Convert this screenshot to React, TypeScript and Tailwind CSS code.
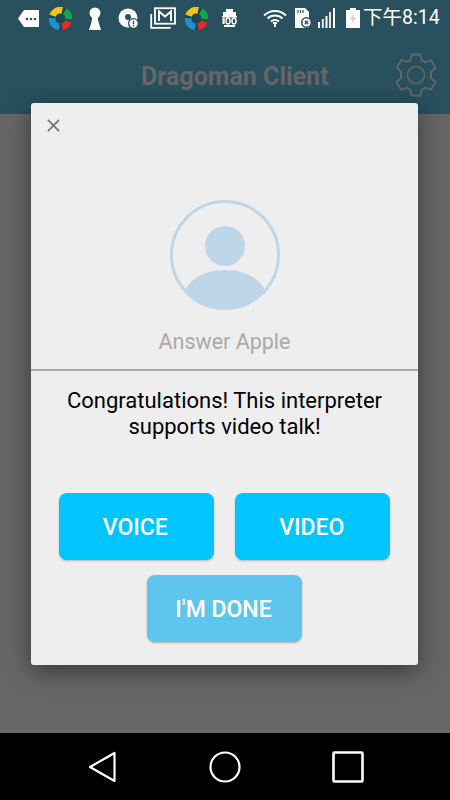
import React from 'react';

const AppRing: React.FC<{ className?: string }> = ({ className }) => (
    <svg viewBox="0 0 22 22" className={className} fill="none" strokeWidth="6.500">
        <circle cx="11" cy="11" r="11" fill="#1f4654" stroke="none" />
        <path d="M3.400 8.200A8 8 0 0 1 12.600 3.200" stroke="#f2c80f" />
        <path d="M15 4.100A8 8 0 0 1 19 11.500" stroke="#12a84a" />
        <path d="M18.600 13.700A8 8 0 0 1 12.500 18.900" stroke="#d9302c" />
        <path d="M9.800 18.900A8 8 0 0 1 3 10.500" stroke="#1b92d0" />
    </svg>
);

const StatusBar: React.FC = () => (
    <div className="flex h-[36px] items-center pl-[18px]">
        <svg viewBox="0 0 21 17" className="h-[17px] w-[21px]">
            <path d="M6 0h15v17H6L0 8.500z" fill="#fff" />
            <circle cx="9" cy="9" r="1.300" fill="#28505e" />
            <circle cx="13" cy="9" r="1.300" fill="#28505e" />
            <circle cx="17" cy="9" r="1.300" fill="#28505e" />
        </svg>
        <AppRing className="ml-[10px] h-[23px] w-[23px]" />
        <svg viewBox="0 0 14 23" className="ml-[16px] h-[23px] w-[14px]">
            <circle cx="7" cy="6" r="5.500" fill="#fff" />
            <path d="M4.500 9h5l1 6 2.500 8H1l2.500-8z" fill="#fff" />
        </svg>
        <svg viewBox="0 0 21 21" className="ml-[16px] h-[21px] w-[21px]">
            <circle cx="10" cy="10" r="9.500" fill="#fff" />
            <circle cx="10" cy="9" r="3" fill="#28505e" />
            <circle cx="15.500" cy="15.500" r="5.500" fill="#28505e" />
            <circle cx="15.500" cy="15.500" r="4.200" fill="#fff" />
            <rect x="14.800" y="12.800" width="1.400" height="3.400" fill="#28505e" />
            <rect x="14.800" y="17" width="1.400" height="1.300" fill="#28505e" />
        </svg>
        <svg viewBox="0 0 26 22" className="ml-[11px] h-[22px] w-[26px]" fill="none" stroke="#fff">
            <path d="M1.200 7v13.800h19.500" strokeWidth="1.800" />
            <rect x="5" y="1.200" width="20" height="15.500" fill="#28505e" strokeWidth="1.800" />
            <path d="M9 14V4.500l6 5 6-5V14" strokeWidth="2" />
        </svg>
        <AppRing className="ml-[9px] h-[23px] w-[23px]" />
        <svg viewBox="0 0 17 20" className="ml-[13px] h-[20px] w-[17px]">
            <path d="M5 1h7v3h3v4H2V4h3z" fill="#fff" />
            <rect x="1" y="8" width="15" height="1.500" fill="#fff" />
            <rect x="1.500" y="10" width="2.200" height="6" fill="#fff" />
            <ellipse cx="7" cy="13" rx="2" ry="3" fill="none" stroke="#fff" strokeWidth="1.500" />
            <ellipse cx="13" cy="13" rx="2" ry="3" fill="none" stroke="#fff" strokeWidth="1.500" />
            <rect x="3" y="17" width="11" height="2" fill="#fff" />
        </svg>
        <svg viewBox="0 0 24 20" className="ml-[25px] h-[20px] w-[24px]" fill="none" stroke="#fff" strokeWidth="1.800">
            <path d="M1 7.500C7 1.500 17 1.500 23 7.500" />
            <path d="M4.500 10.500C8.500 6.500 15.500 6.500 19.500 10.500" />
            <path d="M8 13.500c2.200-2 5.800-2 8 0" />
            <rect x="10" y="14" width="4" height="2" fill="#fff" stroke="none" />
            <path d="M12 16v3" />
        </svg>
        <svg viewBox="0 0 17 20" className="ml-[8px] h-[20px] w-[17px]">
            <path d="M0 0h10l4 4v16H0z" fill="#fff" />
            <path d="M3 2v3M5.500 2v3M8 2v3" stroke="#28505e" strokeWidth="1.200" />
            <circle cx="11.500" cy="14.500" r="5.500" fill="#28505e" />
            <circle cx="11.500" cy="14.500" r="4" fill="#fff" />
            <path d="M9.800 12.800l3.400 3.400M13.200 12.800l-3.400 3.400" stroke="#28505e" strokeWidth="1.300" />
        </svg>
        <svg viewBox="0 0 17 20" className="ml-[6px] h-[20px] w-[17px]" fill="#fff">
            <rect x="0" y="14" width="2" height="6" />
            <rect x="3.800" y="11" width="2" height="9" opacity=".85" />
            <rect x="7.500" y="8" width="2" height="12" />
            <rect x="11" y="4" width="2" height="16" opacity=".85" />
            <rect x="15" y="0" width="2" height="20" />
        </svg>
        <svg viewBox="0 0 14 20" className="ml-[11px] h-[20px] w-[14px]">
            <path d="M4 0h6v2h4v18H0V2h4z" fill="#fff" />
            <path d="M8 5L4 11.500h2.500L5.500 16 10 9.500H7.500z" fill="#cfd4d6" />
        </svg>
        <span className="ml-[3px] font-['Roboto','Noto_Sans_CJK_TC',sans-serif] text-[19.500px] leading-none text-white">下午8:14</span>
    </div>
);

const Header: React.FC = () => (
    <div className="flex h-[114px] flex-col bg-[#28505e]">
        <StatusBar />
        <div className="relative flex flex-1 items-center pl-[141px] pt-[3px]">
            <h1 className="text-[25px] font-bold text-[#666]">Dragoman Client</h1>
            <svg viewBox="0 0 44 44" className="absolute right-[12px] top-[17px] h-[44px] w-[44px]" fill="none" stroke="#666" strokeWidth="1.800">
                <path d="M17.500 1.500h9l1.500 6 3.500 1.800 5.500-2 4.500 7.500-4.500 4.200v6l4.500 4.200-4.500 7.500-5.500-2-3.500 1.800-1.500 6h-9l-1.500-6-3.500-1.800-5.500 2-4.500-7.500 4.500-4.200v-6L3 14.300l4.500-7.500 5.500 2 3.500-1.800z" strokeLinejoin="round" />
                <circle cx="22" cy="22" r="8.500" strokeWidth="1.500" />
            </svg>
        </div>
    </div>
);

const Dialog: React.FC = () => (
    <div className="absolute left-[31px] top-[103px] flex h-[562px] w-[387px] flex-col rounded-[3px] bg-[#eee] shadow-[0_6px_24px_rgba(0,0,0,0.45)]">
        <svg viewBox="0 0 14 14" className="ml-[16px] mt-[16px] h-[13px] w-[13px]" fill="none" stroke="#777" strokeWidth="2">
            <path d="M1 1l12 12M13 1L1 13" />
        </svg>
        <svg viewBox="0 0 110 110" className="ml-[138.500px] mt-[68px] h-[110px] w-[110px]">
            <circle cx="55" cy="55" r="53.500" fill="none" stroke="#bdd6ea" strokeWidth="3" />
            <circle cx="55" cy="46" r="20" fill="#bdd6ea" />
            <path d="M15 90C22 77 37 70 55 70s33 7 40 20C85 102 71 109 55 109S25 102 15 90z" fill="#bdd6ea" />
        </svg>
        <p className="mt-[18px] text-center text-[21.500px] leading-[28px] text-[#aaa]">Answer Apple</p>
        <div className="mt-[13px] h-[2px] bg-[#aaa]" />
        <p className="mt-[17px] text-center text-[22px] leading-[26px] text-black">
            Congratulations! This interpreter<br />supports video talk!
        </p>
        <div className="mt-[53px] flex justify-center gap-[21.500px]">
            <button className="h-[67px] w-[155px] rounded-[8px] bg-[#00c5ff] pt-[3px] pr-[2px] text-[23px] font-medium text-white shadow-[0_1px_2px_rgba(0,0,0,0.25)]">VOICE</button>
            <button className="h-[67px] w-[155px] rounded-[8px] bg-[#00c5ff] pt-[3px] pr-[2px] text-[23px] font-medium text-white shadow-[0_1px_2px_rgba(0,0,0,0.25)]">VIDEO</button>
        </div>
        <button className="mx-auto mt-[15px] h-[67px] w-[155px] rounded-[8px] bg-[#5ec6ec] pt-[3px] pr-[2px] text-[23px] font-medium text-white shadow-[0_1px_2px_rgba(0,0,0,0.25)]">I'M DONE</button>
    </div>
);

const NavBar: React.FC = () => (
    <div className="flex h-[67px] items-center bg-black pl-[88px]">
        <svg viewBox="0 0 28 32" className="h-[32px] w-[28px]" fill="none" stroke="#fff" strokeWidth="2.200">
            <path d="M26.500 2v28L2 16z" strokeLinejoin="round" />
        </svg>
        <svg viewBox="0 0 32 32" className="ml-[93px] h-[32px] w-[32px]" fill="none" stroke="#fff" strokeWidth="2.200">
            <circle cx="16" cy="16" r="14.500" />
        </svg>
        <svg viewBox="0 0 32 32" className="ml-[91px] h-[32px] w-[32px]" fill="none" stroke="#fff" strokeWidth="2.600">
            <rect x="1.500" y="1.500" width="29" height="29" rx="1" />
        </svg>
    </div>
);

export default function App() {
    return (
        <div className="relative flex h-[800px] w-[450px] flex-col overflow-hidden bg-[#666] font-['Roboto',sans-serif]">
            <Header />
            <div className="flex-1" />
            <NavBar />
            <Dialog />
        </div>
    );
}
